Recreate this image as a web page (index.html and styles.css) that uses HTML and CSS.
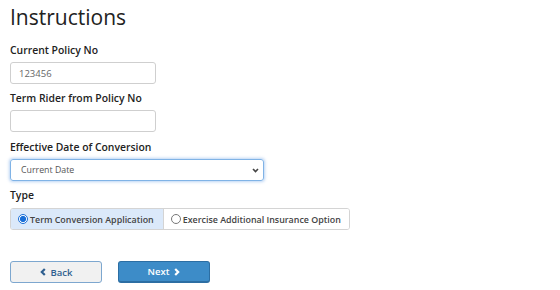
FILE: index.html
```html
<!DOCTYPE html>
<html lang="en">

<head>
    <meta charset="UTF-8">
    <title>Instructions</title>
    <link rel="stylesheet" href="styles.css">
</head>

<body>
    <h1 class="page-title">Instructions</h1>

    <div class="field">
        <label class="field-label">Current Policy No</label>
        <input class="text-input" type="text" value="123456">
    </div>

    <div class="field">
        <label class="field-label">Term Rider from Policy No</label>
        <input class="text-input" type="text">
    </div>

    <div class="field field-date">
        <label class="field-label">Effective Date of Conversion</label>
        <div class="select-box">
            <span>Current Date</span>
            <svg class="chevron" width="7" height="5" viewBox="0 0 7 5">
                <path d="M1 1 L3.5 3.5 L6 1" fill="none" stroke="#444" stroke-width="1.6" />
            </svg>
        </div>
    </div>

    <div class="field">
        <label class="field-label">Type</label>
        <div class="radio-group">
            <div class="radio-option selected">
                <span class="radio-dot checked"></span>Term Conversion Application
            </div>
            <div class="radio-option">
                <span class="radio-dot"></span>Exercise Additional Insurance Option
            </div>
        </div>
    </div>

    <div class="actions">
        <button class="btn btn-back">
            <svg width="6" height="8" viewBox="0 0 6 8"><path d="M4.8 1 L1.8 4 L4.8 7" fill="none" stroke="#2f5f8f" stroke-width="2.2" /></svg>
            Back
        </button>
        <button class="btn btn-next">
            Next
            <svg width="6" height="8" viewBox="0 0 6 8"><path d="M1.2 1 L4.2 4 L1.2 7" fill="none" stroke="#fff" stroke-width="2.2" /></svg>
        </button>
    </div>
</body>

</html>
```

FILE: styles.css
```css
body {
    margin: 0;
    padding: 0 10px;
    font-family: "Open Sans", Arial, sans-serif;
    color: #222;
    background: #fff;
}

.page-title {
    margin: 0 0 11px;
    padding-top: 2px;
    font-size: 21px;
    font-weight: 400;
    line-height: 30px;
    color: #222;
}

.field {
    margin-top: 7px;
}

.field-date {
    margin-top: 8px;
}

.field-label {
    display: block;
    font-size: 10.4px;
    font-weight: 600;
    line-height: 14px;
    margin-bottom: 5px;
}

.text-input {
    box-sizing: border-box;
    display: block;
    width: 146px;
    height: 22px;
    margin: 0;
    padding: 0 8px;
    border: 1px solid #cfcfcf;
    border-radius: 3px;
    font-family: inherit;
    font-size: 9.5px;
    color: #666;
    outline: none;
}

.select-box {
    box-sizing: border-box;
    display: flex;
    justify-content: space-between;
    align-items: center;
    width: 254px;
    height: 22px;
    padding: 0 4px 0 10px;
    border: 1px solid #80b3e6;
    border-radius: 3px;
    box-shadow: 0 0 3px 1px rgba(102, 160, 230, 0.45);
    font-size: 8.8px;
    color: #555;
}

.radio-group {
    display: inline-flex;
    height: 22px;
    border: 1px solid #d4d4d4;
    border-radius: 3px;
    overflow: hidden;
    box-sizing: border-box;
}

.radio-option {
    display: flex;
    align-items: center;
    padding: 0 8px 0 7px;
    font-size: 8.9px;
    font-weight: 600;
    color: #444;
    background: #fff;
}

.radio-option.selected {
    background: #dbe9fa;
    border-right: 1px solid #d4d4d4;
    padding-right: 9px;
}

.radio-dot {
    box-sizing: border-box;
    width: 10px;
    height: 10px;
    margin-right: 2px;
    border: 1px solid #777;
    border-radius: 50%;
    background: #fff;
}

.radio-dot.checked {
    border-color: #1a6fd8;
    background: radial-gradient(circle, #1a6fd8 0 2.8px, #fff 3.3px);
}

.actions {
    display: flex;
    gap: 16px;
    margin-top: 31px;
}

.btn {
    box-sizing: border-box;
    display: flex;
    align-items: center;
    justify-content: center;
    gap: 5px;
    width: 92px;
    height: 22px;
    border-radius: 3px;
    font-family: inherit;
    font-size: 9.5px;
    font-weight: 600;
    padding: 0;
}

.btn-back {
    background: #f1f1f1;
    border: 1px solid #7da7cf;
    color: #2f5f8f;
}

.btn-next {
    background: #3d8cc8;
    border: 1px solid #2c6ea3;
    border-bottom-width: 2px;
    color: #fff;
}
```
